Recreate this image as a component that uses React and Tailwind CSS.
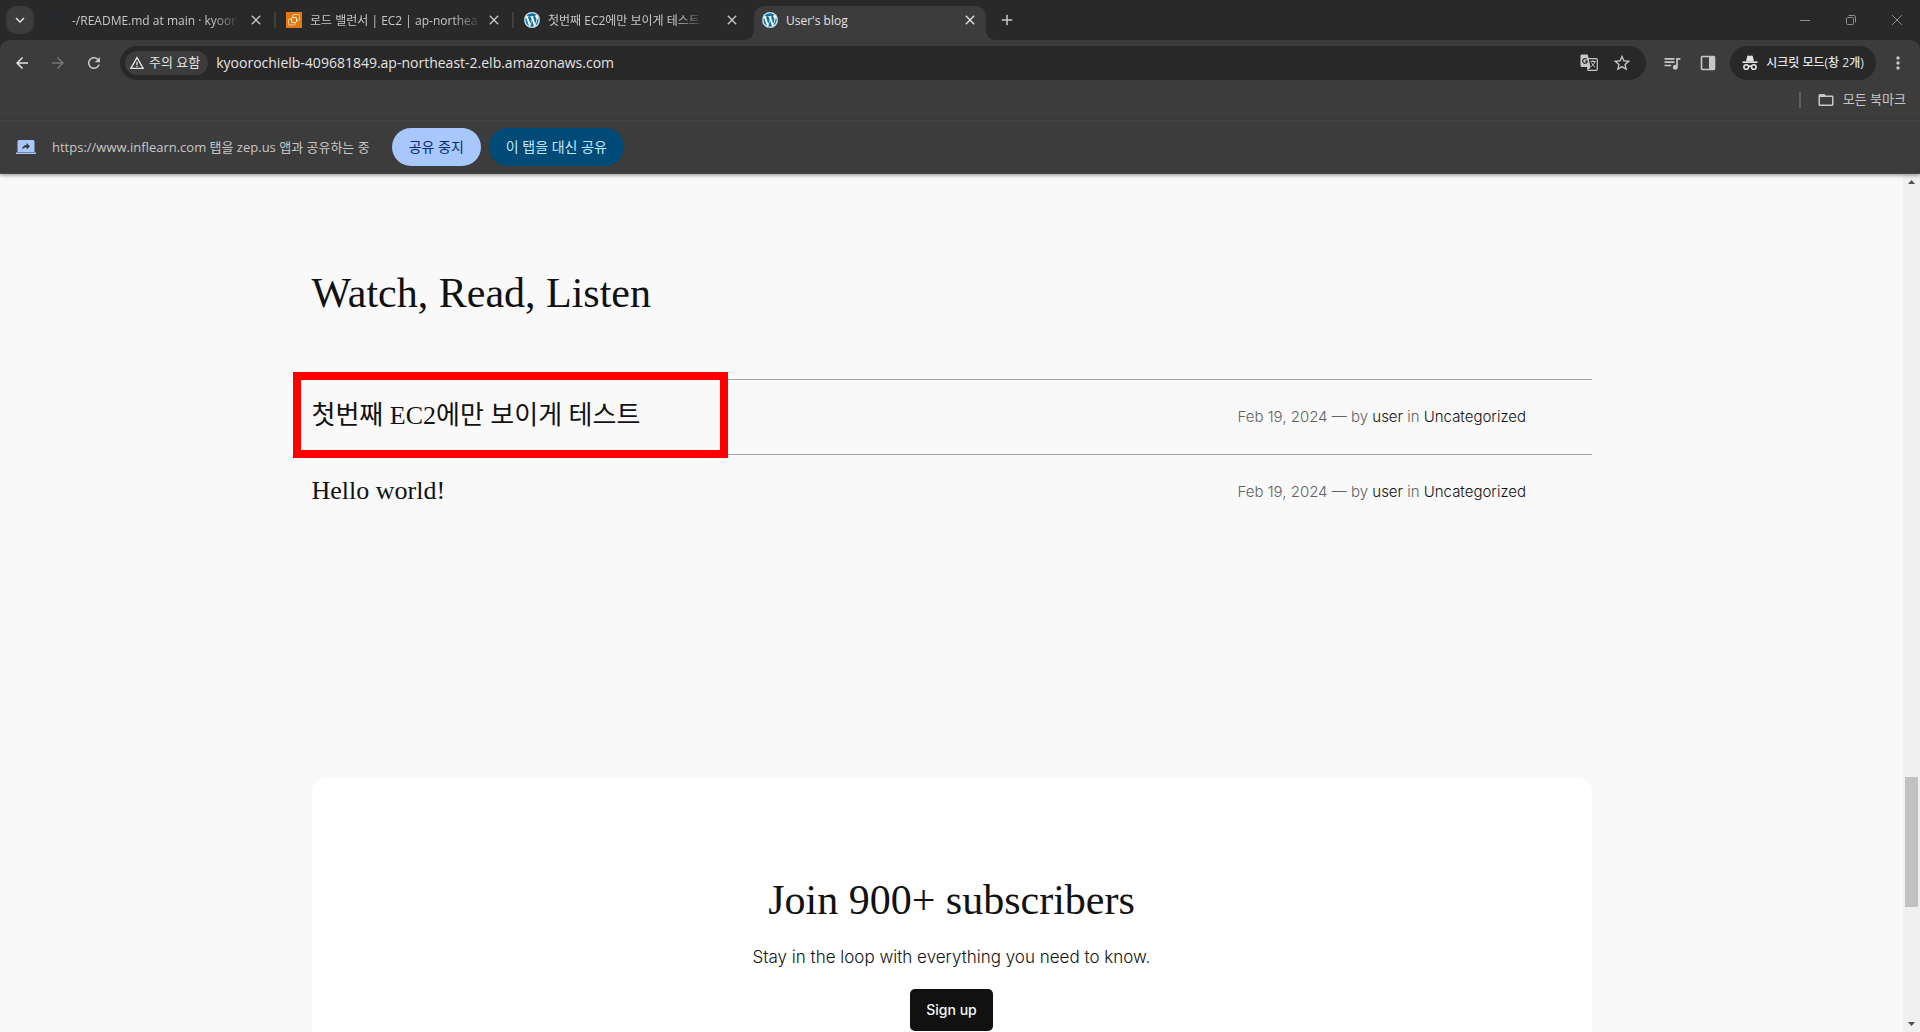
import { FaWordpress, FaGithub } from "react-icons/fa";
import {
  MdArrowBack,
  MdArrowForward,
  MdRefresh,
  MdClose,
  MdAdd,
  MdExpandMore,
  MdStarBorder,
  MdMoreVert,
  MdQueueMusic,
  MdFolderOpen,
  MdWarningAmber,
} from "react-icons/md";

function Ec2Icon() {
  return (
    <svg viewBox="0 0 16 16" className="size-4 shrink-0" fill="none" stroke="#f9c99b">
      <rect width="16" height="16" fill="#e0770f" stroke="none" />
      <rect x="2.500" y="7" width="6.500" height="6" rx="1" />
      <rect x="7" y="2.500" width="6.500" height="6" rx="1" />
      <rect x="5.500" y="5.500" width="5" height="5" rx="1" fill="#e0770f" stroke="#fff" />
    </svg>
  );
}

function WordpressIcon() {
  return (
    <span className="flex size-4 shrink-0 items-center justify-center rounded-full bg-white text-[#12749e]">
      <FaWordpress className="size-4" />
    </span>
  );
}

function TranslateIcon() {
  return (
    <svg viewBox="0 0 18 18" className="size-[18px]" fill="none">
      <rect x="7.700" y="4.700" width="9.600" height="11.600" rx="1" stroke="currentColor" strokeWidth="1.200" />
      <path d="M1.500.5h6.200l2.800 12.500h-9A1.200 1.200 0 0 1 .5 11.800V1.700A1.200 1.200 0 0 1 1.500.5z" fill="currentColor" />
      <path d="M7.500 13h3.200l-2 2.800z" fill="currentColor" />
      <path d="M6.600 5.300A2.300 2.300 0 1 0 7.300 7.200H5.200" stroke="#282828" strokeWidth="1.200" />
      <path d="M10.500 7.500h5.300M13 6.200v1.300M14.800 7.500c-.4 2.500-2 4-3.600 5.200M11.600 8.700c.7 2 2.200 3.400 3.700 4.500" stroke="currentColor" />
    </svg>
  );
}

function IncognitoIcon() {
  return (
    <svg viewBox="0 0 16 16" className="size-4 shrink-0" fill="none" stroke="currentColor">
      <path d="M4 6.5 5.2 1.2C5.4.4 6 .3 6.600.5L8 1l1.400-.5c.6-.2 1.200-.1 1.400.7L12 6.500z" fill="currentColor" stroke="none" />
      <path d="M.5 7.200h15" strokeWidth="1.600" />
      <circle cx="4.200" cy="12" r="2.300" strokeWidth="1.600" />
      <circle cx="11.800" cy="12" r="2.300" strokeWidth="1.600" />
      <path d="M6.300 11.600c1-.8 2.400-.8 3.400 0" strokeWidth="1.400" />
    </svg>
  );
}

function SidePanelIcon() {
  return (
    <svg viewBox="0 0 16 16" className="size-4" fill="none">
      <rect x="1.500" y="1.500" width="13" height="13" rx="1" stroke="currentColor" strokeWidth="1.600" />
      <rect x="9" y="1.500" width="5.500" height="13" fill="currentColor" />
    </svg>
  );
}

function ShareTabIcon() {
  return (
    <svg viewBox="0 0 20 14" className="h-3.5 w-5 shrink-0">
      <path d="M3 0h14a1.500 1.500 0 0 1 1.500 1.500V12H1.500V1.500A1.500 1.500 0 0 1 3 0zM0 12.500h20V14H0z" fill="#a8c7fa" />
      <path d="M6 9.500C6.300 6.500 8 5 10.700 4.700V3L14 6.200l-3.300 3.200V7.600C8.700 7.600 7.200 8.200 6 9.500z" fill="#3c3c3c" />
    </svg>
  );
}

const tabs = [
  { title: "-/README.md at main · kyoor", icon: <FaGithub className="size-4 shrink-0 text-[#24292f]" /> },
  { title: "로드 밸런서 | EC2 | ap-northea", icon: <Ec2Icon /> },
  { title: "첫번째 EC2에만 보이게 테스트", icon: <WordpressIcon /> },
  { title: "User's blog", icon: <WordpressIcon />, active: true },
];

function Tab({ title, icon, active }) {
  return (
    <div
      className={
        active
          ? "relative flex h-[34px] w-[232px] shrink-0 items-center self-end rounded-t-[10px] bg-[#3c3c3c] px-2 pb-1.5 text-[#e3e3e3]"
          : "flex h-[34px] w-[232px] shrink-0 items-center self-end px-2 pb-1.5 text-[#c7c7c7]"
      }
    >
      {active && (
        <>
          <span className="absolute right-full bottom-0 size-2.5 bg-[radial-gradient(circle_at_0_0,transparent_10px,#3c3c3c_10px)]" />
          <span className="absolute bottom-0 left-full size-2.5 bg-[radial-gradient(circle_at_100%_0,transparent_10px,#3c3c3c_10px)]" />
        </>
      )}
      <button role="tab" aria-selected={!!active} className="flex flex-1 items-center gap-2 text-left">
        {icon}
        <span
          className={
            active
              ? "pt-0.5 text-xs whitespace-nowrap"
              : "pt-0.5 text-xs whitespace-nowrap [mask-image:linear-gradient(to_right,black_85%,#0003)]"
          }
        >
          {title}
        </span>
      </button>
      <button aria-label="닫기">
        <MdClose className="size-4" />
      </button>
    </div>
  );
}

function TabStrip() {
  return (
    <header className="flex h-10 shrink-0 items-center bg-[#292929]">
      <button aria-label="탭 검색" className="ml-1.5 flex size-7 items-center justify-center rounded-[10px] bg-[#3c3c3c] text-[#e3e3e3]">
        <MdExpandMore className="size-[18px]" />
      </button>
      <div role="tablist" className="ml-1.5 flex h-full items-center">
        {tabs.map((t, i) => (
          <div key={t.title} className="flex h-full items-center">
            <Tab {...t} />
            {i < 3 && (
              <span className="flex w-1.5 shrink-0 justify-center">
                {i < 2 && <span className="h-4 w-0.5 bg-[#3f3f3f]" />}
              </span>
            )}
          </div>
        ))}
      </div>
      <button aria-label="새 탭" className="ml-3 text-[#c7c7c7]">
        <MdAdd className="size-[18px]" />
      </button>
      <div className="ml-auto flex items-center text-[#8c8c8c]">
        <button aria-label="최소화" className="flex w-[46px] justify-center">
          <svg viewBox="0 0 10 10" className="size-2.5" stroke="currentColor"><path d="M0 5.500h10" /></svg>
        </button>
        <button aria-label="이전 크기로 복원" className="flex w-[46px] justify-center">
          <svg viewBox="0 0 10 10" className="size-2.5" fill="none" stroke="currentColor">
            <rect x=".5" y="2.500" width="7" height="7" rx="1" />
            <path d="M2.500.5H8A1.500 1.500 0 0 1 9.500 2v5.500" />
          </svg>
        </button>
        <button aria-label="창 닫기" className="flex w-[46px] justify-center">
          <svg viewBox="0 0 10 10" className="size-2.5" stroke="currentColor"><path d="M0 0l10 10M10 0 0 10" /></svg>
        </button>
      </div>
    </header>
  );
}

function Toolbar() {
  return (
    <div className="shrink-0 bg-[#292929]">
      <div className="flex h-[46px] items-center rounded-t-[10px] bg-[#3c3c3c] text-[#c7c7c7]">
        <div className="flex items-center gap-[18px] pl-[13px]">
          <button aria-label="뒤로" className="text-[#e3e3e3]"><MdArrowBack className="size-[18px]" /></button>
          <button aria-label="앞으로" className="text-[#757575]"><MdArrowForward className="size-[18px]" /></button>
          <button aria-label="새로고침"><MdRefresh className="size-[18px]" /></button>
        </div>
        <div className="ml-[17px] flex h-[34px] flex-1 items-center rounded-full bg-[#282828] pr-3.5 pl-[5px]">
          <button className="flex h-6 items-center gap-1 rounded-full bg-[#3c3c3c] pr-2 pl-1 text-[13px] text-[#e3e3e3]">
            <MdWarningAmber className="size-4" />
            주의 요함
          </button>
          <input
            aria-label="주소창"
            defaultValue="kyoorochielb-409681849.ap-northeast-2.elb.amazonaws.com"
            className="ml-2 min-w-0 flex-1 bg-transparent text-sm text-[#e3e3e3] outline-none"
          />
          <button aria-label="이 페이지 번역하기"><TranslateIcon /></button>
          <button aria-label="북마크에 추가" className="ml-3.5"><MdStarBorder className="size-5" /></button>
        </div>
        <button aria-label="미디어 제어" className="ml-4"><MdQueueMusic className="size-5" /></button>
        <button aria-label="측면 패널" className="ml-[18px]"><SidePanelIcon /></button>
        <button className="ml-3.5 flex h-[34px] w-[146px] items-center justify-center gap-2 rounded-full bg-[#282828] text-xs font-medium whitespace-nowrap text-[#e3e3e3]">
          <IncognitoIcon />
          시크릿 모드(창 2개)
        </button>
        <button aria-label="메뉴" className="mr-3 ml-3"><MdMoreVert className="size-5" /></button>
      </div>
    </div>
  );
}

function BookmarksBar() {
  return (
    <div className="flex h-[35px] shrink-0 items-start justify-end border-b border-[#4a4a4a] bg-[#3c3c3c] pt-1 pr-3.5 text-[#c7c7c7]">
      <span className="mt-0.5 mr-4 h-4 w-0.5 bg-[#5f5f5f]" />
      <button className="flex h-5 items-center gap-2 text-[13px]">
        <MdFolderOpen className="size-[18px]" />
        모든 북마크
      </button>
    </div>
  );
}

function ShareBar() {
  return (
    <div className="relative z-10 flex h-[53px] shrink-0 items-center border-b border-[#4c464c] bg-[#3c3c3c] pl-4 text-sm shadow-[0_1px_4px_rgba(0,0,0,0.45)]">
      <ShareTabIcon />
      <span className="mr-[22px] ml-4 text-[13px] text-[#c7c7c7]">https://www.inflearn.com 탭을 zep.us 앱과 공유하는 중</span>
      <button className="h-[38px] rounded-full bg-[#a8c7fa] px-[17px] text-[#062e6f]">공유 중지</button>
      <button className="ml-2 h-[38px] rounded-full bg-[#004a77] px-[17px] text-[#c2e7ff]">이 탭을 대신 공유</button>
    </div>
  );
}

const serif = "font-['Liberation_Serif','Noto_Sans_CJK_KR',serif]";

function PostRow({ title, highlighted }) {
  return (
    <article className="relative flex h-[75px] items-center border-t border-[#a4a4a4]">
      <h3 className="flex-1 pb-1 text-[26px] leading-8 text-[#111]">
        <a href="#post" className={serif}>{title}</a>
      </h3>
      <p className="w-[354px] text-[15px] text-[#636363] font-['Inter',sans-serif] font-light">
        Feb 19, 2024 — by{" "}
        <a href="#user" className="text-[#111]">user</a> in{" "}
        <a href="#uncategorized" className="text-[#111]">Uncategorized</a>
      </p>
      {highlighted && (
        <span className="pointer-events-none absolute -top-2 -left-[19px] z-10 h-[86px] w-[435px] border-8 border-[#fe0000]" />
      )}
    </article>
  );
}

function BlogPage() {
  return (
    <main className="flex-1 overflow-hidden bg-[#f9f9f9] text-[#111]">
      <div className="mx-auto max-w-[1280px] pt-[90px]">
        <h2 className={"text-[42px] leading-[58px] " + serif}>Watch, Read, Listen</h2>
        <section className="mt-[57px]">
          <PostRow title="첫번째 EC2에만 보이게 테스트" highlighted />
          <PostRow title="Hello world!" />
        </section>
        <section className="mt-[248px] flex flex-col items-center rounded-2xl bg-white pt-[94px] pb-24">
          <h2 className={"text-[42px] leading-[58px] " + serif}>Join 900+ subscribers</h2>
          <p className="mt-4 text-[17px] leading-6 font-light font-['Inter',sans-serif]">
            Stay in the loop with everything you need to know.
          </p>
          <button className="mt-5 h-[42px] rounded-[5px] bg-[#111] px-4 text-sm font-medium text-[#f9f9f9] font-['Inter',sans-serif]">
            Sign up
          </button>
        </section>
      </div>
    </main>
  );
}

function ScrollBar() {
  return (
    <div aria-hidden="true" className="flex w-[17px] shrink-0 flex-col items-center bg-[#f0f0f0] py-1.5">
      <svg viewBox="0 0 7 4" className="h-1 w-[7px]" fill="#505050"><path d="M3.500 0 7 4H0z" /></svg>
      <div className="grow-[592]" />
      <div className="w-[13px] grow-[130] bg-[#c1c1c1]" />
      <div className="grow-[115]" />
      <svg viewBox="0 0 7 4" className="h-1 w-[7px]" fill="#505050"><path d="M0 0h7L3.500 4z" /></svg>
    </div>
  );
}

export default function App() {
  return (
    <div className="flex h-screen flex-col overflow-hidden font-['Open_Sans','Noto_Sans_CJK_KR',sans-serif]">
      <TabStrip />
      <Toolbar />
      <BookmarksBar />
      <ShareBar />
      <div className="flex min-h-0 flex-1">
        <BlogPage />
        <ScrollBar />
      </div>
    </div>
  );
}
